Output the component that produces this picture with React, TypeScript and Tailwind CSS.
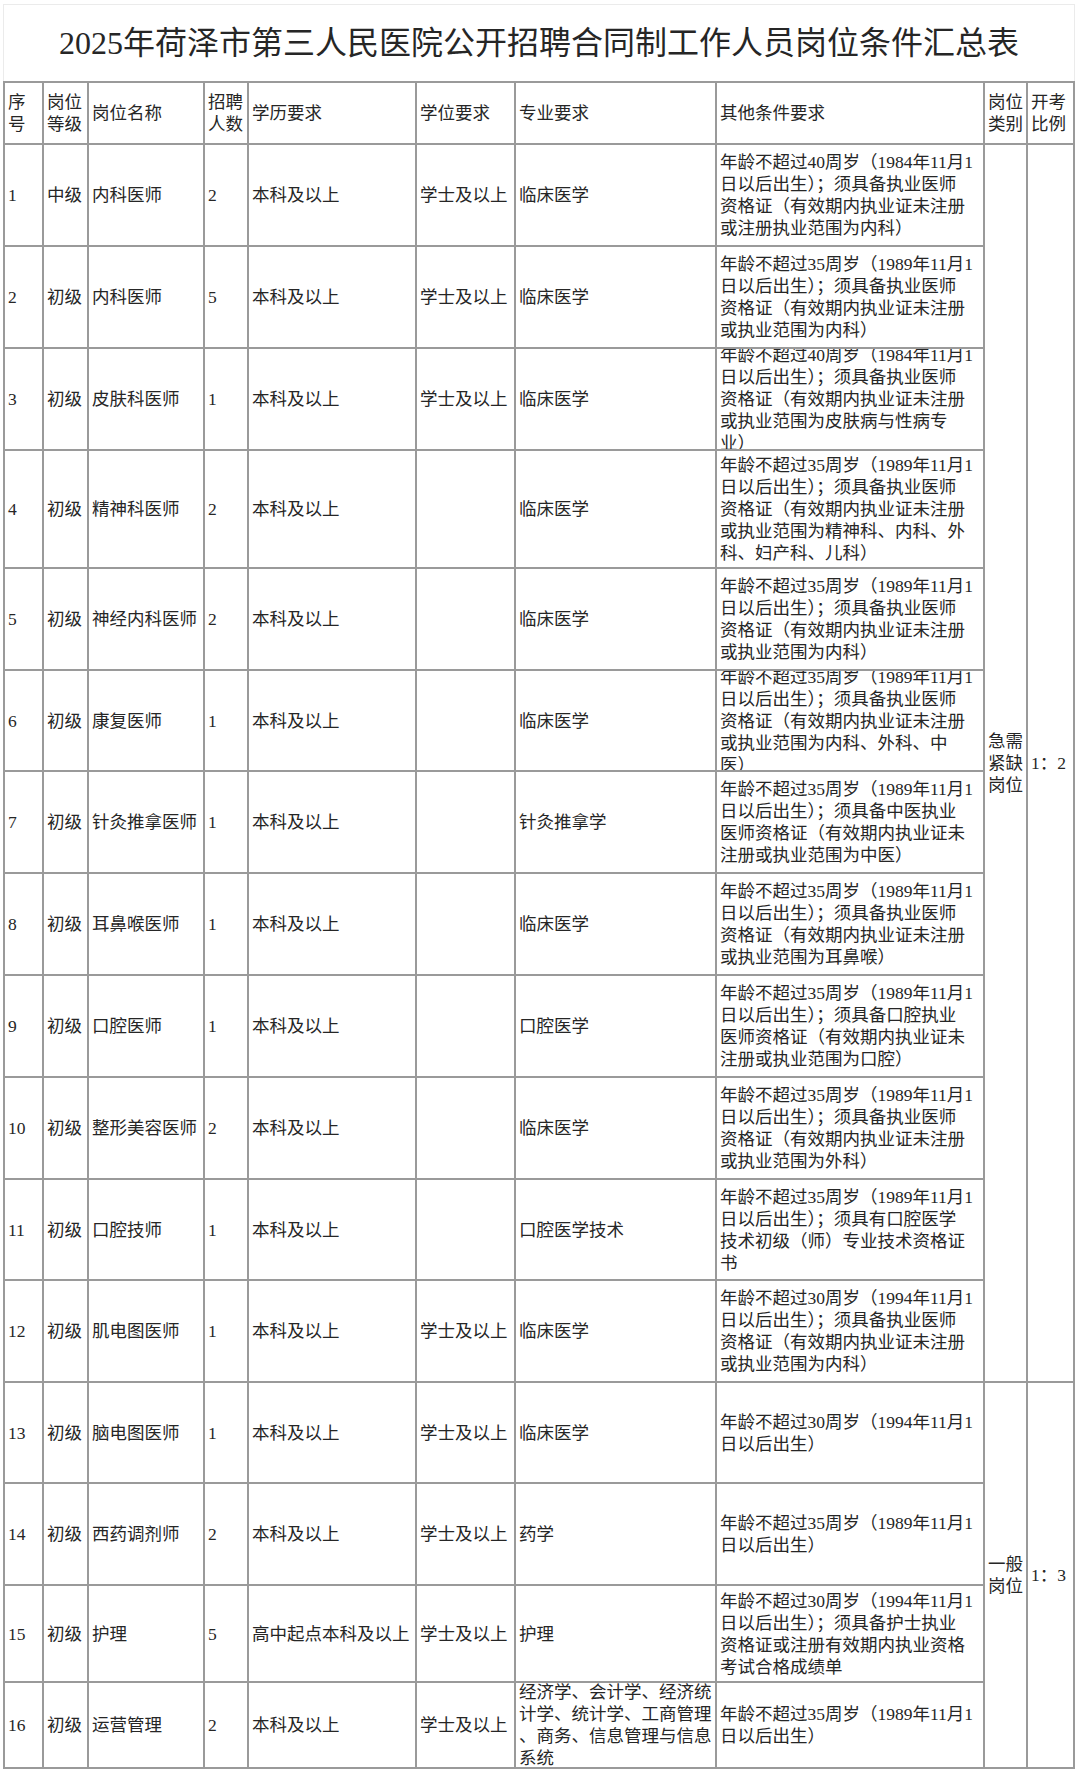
import React from 'react';

type Row = {
  no: string;
  level: string;
  name: string;
  count: string;
  edu: string;
  degree: string;
  major: string[];
  other: string[];
};

const rows: Row[] = [
  { no: '1', level: '中级', name: '内科医师', count: '2', edu: '本科及以上', degree: '学士及以上', major: ['临床医学'], other: ['年龄不超过40周岁（1984年11月1', '日以后出生）；须具备执业医师', '资格证（有效期内执业证未注册', '或注册执业范围为内科）'] },
  { no: '2', level: '初级', name: '内科医师', count: '5', edu: '本科及以上', degree: '学士及以上', major: ['临床医学'], other: ['年龄不超过35周岁（1989年11月1', '日以后出生）；须具备执业医师', '资格证（有效期内执业证未注册', '或执业范围为内科）'] },
  { no: '3', level: '初级', name: '皮肤科医师', count: '1', edu: '本科及以上', degree: '学士及以上', major: ['临床医学'], other: ['年龄不超过40周岁（1984年11月1', '日以后出生）；须具备执业医师', '资格证（有效期内执业证未注册', '或执业范围为皮肤病与性病专', '业）'] },
  { no: '4', level: '初级', name: '精神科医师', count: '2', edu: '本科及以上', degree: '', major: ['临床医学'], other: ['年龄不超过35周岁（1989年11月1', '日以后出生）；须具备执业医师', '资格证（有效期内执业证未注册', '或执业范围为精神科、内科、外', '科、妇产科、儿科）'] },
  { no: '5', level: '初级', name: '神经内科医师', count: '2', edu: '本科及以上', degree: '', major: ['临床医学'], other: ['年龄不超过35周岁（1989年11月1', '日以后出生）；须具备执业医师', '资格证（有效期内执业证未注册', '或执业范围为内科）'] },
  { no: '6', level: '初级', name: '康复医师', count: '1', edu: '本科及以上', degree: '', major: ['临床医学'], other: ['年龄不超过35周岁（1989年11月1', '日以后出生）；须具备执业医师', '资格证（有效期内执业证未注册', '或执业范围为内科、外科、中', '医）'] },
  { no: '7', level: '初级', name: '针灸推拿医师', count: '1', edu: '本科及以上', degree: '', major: ['针灸推拿学'], other: ['年龄不超过35周岁（1989年11月1', '日以后出生）；须具备中医执业', '医师资格证（有效期内执业证未', '注册或执业范围为中医）'] },
  { no: '8', level: '初级', name: '耳鼻喉医师', count: '1', edu: '本科及以上', degree: '', major: ['临床医学'], other: ['年龄不超过35周岁（1989年11月1', '日以后出生）；须具备执业医师', '资格证（有效期内执业证未注册', '或执业范围为耳鼻喉）'] },
  { no: '9', level: '初级', name: '口腔医师', count: '1', edu: '本科及以上', degree: '', major: ['口腔医学'], other: ['年龄不超过35周岁（1989年11月1', '日以后出生）；须具备口腔执业', '医师资格证（有效期内执业证未', '注册或执业范围为口腔）'] },
  { no: '10', level: '初级', name: '整形美容医师', count: '2', edu: '本科及以上', degree: '', major: ['临床医学'], other: ['年龄不超过35周岁（1989年11月1', '日以后出生）；须具备执业医师', '资格证（有效期内执业证未注册', '或执业范围为外科）'] },
  { no: '11', level: '初级', name: '口腔技师', count: '1', edu: '本科及以上', degree: '', major: ['口腔医学技术'], other: ['年龄不超过35周岁（1989年11月1', '日以后出生）；须具有口腔医学', '技术初级（师）专业技术资格证', '书'] },
  { no: '12', level: '初级', name: '肌电图医师', count: '1', edu: '本科及以上', degree: '学士及以上', major: ['临床医学'], other: ['年龄不超过30周岁（1994年11月1', '日以后出生）；须具备执业医师', '资格证（有效期内执业证未注册', '或执业范围为内科）'] },
  { no: '13', level: '初级', name: '脑电图医师', count: '1', edu: '本科及以上', degree: '学士及以上', major: ['临床医学'], other: ['年龄不超过30周岁（1994年11月1', '日以后出生）'] },
  { no: '14', level: '初级', name: '西药调剂师', count: '2', edu: '本科及以上', degree: '学士及以上', major: ['药学'], other: ['年龄不超过35周岁（1989年11月1', '日以后出生）'] },
  { no: '15', level: '初级', name: '护理', count: '5', edu: '高中起点本科及以上', degree: '学士及以上', major: ['护理'], other: ['年龄不超过30周岁（1994年11月1', '日以后出生）；须具备护士执业', '资格证或注册有效期内执业资格', '考试合格成绩单'] },
  { no: '16', level: '初级', name: '运营管理', count: '2', edu: '本科及以上', degree: '学士及以上', major: ['经济学、会计学、经济统', '计学、统计学、工商管理', '、商务、信息管理与信息', '系统'], other: ['年龄不超过35周岁（1989年11月1', '日以后出生）'] },
];

function Cell({ lines, className = '' }: { lines: string[]; className?: string }) {
  return (
    <div className={'flex flex-col justify-center overflow-hidden whitespace-nowrap border-r-2 border-b-2 border-[#9a9a9a] pl-[3px] ' + className}>
      {lines.map((l, i) => (
        <div key={i}>{l}</div>
      ))}
    </div>
  );
}

export default function App() {
  return (
    <div className="min-h-screen bg-white pt-[4px] pl-[3px] text-[#262626] font-['Liberation_Serif','Noto_Sans_CJK_SC',serif]">
      <div className="w-[1072px]">
        <div className="flex h-[77px] items-center justify-center border-t border-l border-r border-[#ebebeb] text-[32px] leading-none">
          2025年荷泽市第三人民医院公开招聘合同制工作人员岗位条件汇总表
        </div>

        <div className="grid grid-cols-[39px_45px_116px_44px_168px_99px_201px_268px_43px_47px] grid-rows-[62px_102px_102px_102px_118px_102px_101px_102px_102px_102px_102px_101px_102px_101px_102px_97px_86px] border-t-2 border-l-2 border-[#9a9a9a] text-[17.5px] leading-[22px]">
          <Cell lines={['序', '号']} />
          <Cell lines={['岗位', '等级']} />
          <Cell lines={['岗位名称']} />
          <Cell lines={['招聘', '人数']} />
          <Cell lines={['学历要求']} />
          <Cell lines={['学位要求']} />
          <Cell lines={['专业要求']} />
          <Cell lines={['其他条件要求']} />
          <Cell lines={['岗位', '类别']} />
          <Cell lines={['开考', '比例']} />

          <Cell lines={['急需', '紧缺', '岗位']} className="col-start-9 row-start-2 row-span-12" />
          <Cell lines={['1：2']} className="col-start-10 row-start-2 row-span-12" />
          <Cell lines={['一般', '岗位']} className="col-start-9 row-start-14 row-span-4" />
          <Cell lines={['1：3']} className="col-start-10 row-start-14 row-span-4" />

          {rows.map((r) => (
            <React.Fragment key={r.no}>
              <Cell lines={[r.no]} />
              <Cell lines={[r.level]} />
              <Cell lines={[r.name]} />
              <Cell lines={[r.count]} />
              <Cell lines={[r.edu]} />
              <Cell lines={r.degree ? [r.degree] : []} />
              <Cell lines={r.major} />
              <Cell lines={r.other} />
            </React.Fragment>
          ))}
        </div>
      </div>
    </div>
  );
}
